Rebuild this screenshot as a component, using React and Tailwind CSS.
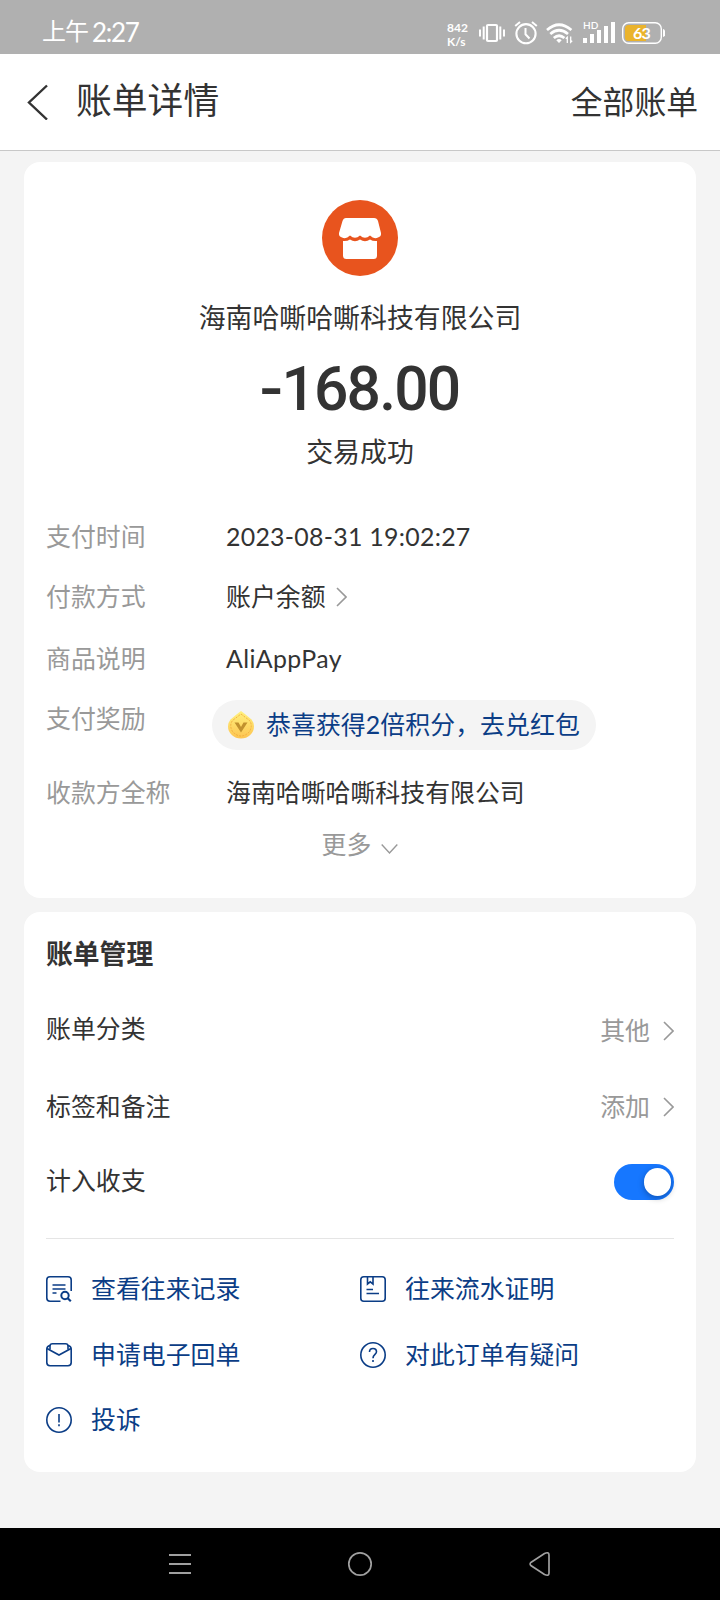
import { useState } from 'react';

const company = '海南哈嘶哈嘶科技有限公司';

const ChevronRight = ({ className }) => (
    <svg className={className} width="12" height="20" viewBox="0 0 12 20" fill="none" stroke="#999999" strokeWidth="1.6">
        <path d="M2 1 L11 10 L2 19" />
    </svg>
);

const StatusBar = () => (
    <div className="flex h-[54px] items-center bg-[#b0b0b0] pt-2 pl-[42px] text-white">
        <span className="flex w-[405px] items-center gap-[4px] text-[24px] leading-[30px] tracking-[-1px]">
            上午
            <span className="pt-px text-[26px] tracking-[-1.3px]">2:27</span>
        </span>
        <div className="w-[32px] pt-[8px] text-[12px] leading-[14px] font-bold">
            <div>842</div>
            <div>K/s</div>
        </div>
        <svg className="mt-1" width="186" height="32" viewBox="479 17 186 32" fill="none" stroke="white">
            <rect x="487" y="25" width="10" height="16" rx="1" strokeWidth="2.2" />
            <path d="M483.7 26.5V39.5M480 29.5V36.5M500.3 26.5V39.5M504 29.5V36.5" strokeWidth="2" />
            <circle cx="526" cy="33.7" r="9.6" strokeWidth="2.1" />
            <path d="M525.5 28V34.3L529.5 38.5" strokeWidth="2" />
            <path d="M515.2 26L520 22M536.8 26L532 22" strokeWidth="2" />
            <path d="M547 30Q559 19.5 571.4 30M550.3 34Q559 26.5 568 34M553.8 38Q559 33.5 564.4 38" strokeWidth="2.7" />
            <path d="M556.3 40.2Q559 38 561.7 40.2L559 43Z" fill="white" stroke="none" />
            <path d="M567.3 43V37.3L565.8 38.7M570.7 36.5V42.2L572.2 40.8" strokeWidth="1.3" />
            <g fill="white" stroke="none">
                <text x="583" y="29.2" className="text-[10px] font-semibold">HD</text>
                <rect x="583" y="38" width="4" height="5" />
                <rect x="590" y="34" width="4" height="9" />
                <rect x="597" y="30" width="4" height="13" />
                <rect x="604" y="26" width="4" height="17" />
                <rect x="611" y="22" width="4" height="21" />
            </g>
            <rect x="622.7" y="22.7" width="38.6" height="20.6" rx="6" strokeWidth="1.4" />
            <path d="M628.5 25H646V41H628.5Q625 41 625 37.5V28.5Q625 25 628.5 25Z" fill="#eab32c" stroke="none" />
            <path d="M663 29Q665.5 29.5 665.5 33T663 37Z" fill="white" stroke="none" />
            <text x="641.5" y="38.8" textAnchor="middle" className="text-[16px] font-bold tracking-[-0.7px]" fill="white" stroke="none">63</text>
        </svg>
    </div>
);

const Header = () => (
    <header className="flex h-[97px] items-center border-b border-[#c8c8c8] bg-white pr-[22px] pl-[26px]">
        <svg width="24" height="36" viewBox="0 0 24 36" fill="none" stroke="#333333" strokeWidth="2.4">
            <path d="M21 1.5 L3 18.5 L21 35.5" />
        </svg>
        <h1 className="ml-[26px] flex-1 pb-[2px] text-[35.8px] leading-[44px]">账单详情</h1>
        <span className="text-[31.8px] leading-[40px]">全部账单</span>
    </header>
);

const ShopLogo = () => (
    <svg width="76" height="76" viewBox="0 0 76 76">
        <circle cx="38" cy="38" r="38" fill="#e8541e" />
        <path d="M24 18H52Q55 18 56 21L59 33Q59.5 36.5 56 37.5Q52 39.5 48 35.5Q43 40 38 35.5Q33 40 28 35.5Q24 39.5 20 37.5Q16.5 36.5 17 33L20.5 21Q21.5 18 24 18Z" fill="white" />
        <path d="M21 41Q25 41.5 28 39.5Q33 43 38 39.5Q43 43 48 39.5Q51 41.5 55 41V55.5Q55 59 51.5 59H24.5Q21 59 21 55.5Z" fill="white" />
    </svg>
);

const Coin = () => (
    <svg width="28" height="28" viewBox="0 0 28 28">
        <defs>
            <linearGradient id="coin" x1="0" y1="0" x2="0" y2="1">
                <stop offset="0" stopColor="#fff27e" />
                <stop offset="1" stopColor="#fdc451" />
            </linearGradient>
        </defs>
        <path d="M14 0Q15 .6 18.5 3.5L24.5 8.5Q27 11.5 27 15.5A13 12 0 0 1 1 15.5Q1 11.5 3.5 8.5L9.5 3.5Q13 .6 14 0Z" fill="url(#coin)" />
        <path d="M14 3L22.5 9.5Q26 14.5 22.5 20.5Q18.5 25 14 25T5.5 20.5Q2 14.5 5.5 9.5Z" fill="none" stroke="#f0a93c" strokeWidth=".9" strokeDasharray="2 1.2" />
        <path d="M7.5 11.5H11.5L14 16L16.5 11.5H20.5L14 21.5Z" fill="#c1912e" />
    </svg>
);

const Detail = ({ label, children, className }) => (
    <div className={`flex h-9 items-center ${className}`}>
        <span className="w-[180px] text-[#999999]">{label}</span>
        {children}
    </div>
);

const icons = {
    record: (
        <>
            <path d="M25.2 15V4Q25.2 .8 22 .8H4Q.8 .8 .8 4V22Q.8 25.2 4 25.2H14.5" />
            <path d="M6.5 9H19.5M6.5 13H19.5M6.5 17H10.5" />
            <circle cx="19" cy="19.5" r="3.7" strokeWidth="2" />
            <path d="M21.7 22.2L24.8 25.2" strokeWidth="2.2" />
        </>
    ),
    flow: (
        <>
            <rect x=".8" y=".8" width="24.4" height="24.4" rx="3" />
            <path d="M7.5 1V8L10.3 5.8L13 8V1M6.5 13.5H13M6.5 17.5H19" />
        </>
    ),
    receipt: (
        <>
            <path d="M4 7.5V4Q4 1.8 6.5 1.8H19.5Q22 1.8 22 4V7.5" />
            <path d="M4 3.5Q.8 4 .8 7V20.5Q.8 23.7 4 23.7H22Q25.2 23.7 25.2 20.5V7Q25.2 4 22 3.5" />
            <path d="M1 6.5L13 13L25 6.5" />
        </>
    ),
    question: (
        <>
            <circle cx="13" cy="13" r="12.2" />
            <path d="M9.5 10Q9.5 6.5 13 6.5T16.5 9.8C16.5 12.5 13 12.5 13 16.3M13 18V20" />
        </>
    ),
    complaint: (
        <>
            <circle cx="13" cy="13" r="12.2" />
            <path d="M13 7V15.5M13 17.2V19.2" />
        </>
    ),
};

const Action = ({ icon, children }) => (
    <a className="flex h-9 items-center gap-[19px] text-[#0b3d86]">
        <svg className="shrink-0" width="26" height="26" viewBox="0 0 26 26" fill="none" stroke="currentColor" strokeWidth="1.6">
            {icons[icon]}
        </svg>
        {children}
    </a>
);

const BillInfo = () => (
    <section className="mx-6 mt-[11px] h-[736px] rounded-2xl bg-white px-[22px] pt-[38px] text-[24.9px]">
        <div className="flex flex-col items-center">
            <ShopLogo />
            <p className="mt-[22px] text-[26.9px] leading-10">{company}</p>
            <p className="mt-[22px] font-[Roboto] text-[60.5px] leading-[60px] font-medium tracking-[-1.8px]">
                <span className="mr-[2px] inline-block scale-x-115">-</span>168.00
            </p>
            <p className="mt-3 text-[26.9px] leading-10">交易成功</p>
        </div>
        <Detail label="支付时间" className="mt-[47px]">
            <span className="tracking-[0.27px]">2023-08-31 19:02:27</span>
        </Detail>
        <Detail label="付款方式" className="mt-6">
            账户余额
            <ChevronRight className="ml-[9px]" />
        </Detail>
        <Detail label="商品说明" className="mt-[26px]">
            <span className="tracking-[0.4px]">AliAppPay</span>
        </Detail>
        <div className="mt-[23px] flex h-[50px]">
            <span className="w-[166px] leading-[37px] text-[#999999]">支付奖励</span>
            <a className="flex items-center gap-[11px] rounded-full bg-[#f4f4f4] pr-4 pl-[15px] whitespace-nowrap text-[#0b3d86]">
                <Coin />
                <span className="tracking-[0.06px]">恭喜获得2倍积分，去兑红包</span>
            </a>
        </div>
        <Detail label="收款方全称" className="mt-[25px]">{company}</Detail>
        <div className="mt-4 flex h-9 items-center justify-center gap-[10px] text-[#999999]">
            更多
            <svg className="mt-2" width="17" height="12" viewBox="0 0 17 12" fill="none" stroke="currentColor" strokeWidth="1.4">
                <path d="M.7 1.5L8.5 10L16.3 1.5" />
            </svg>
        </div>
    </section>
);

const BillManage = () => {
    const [counted, setCounted] = useState(true);

    return (
        <section className="mx-6 mt-[14px] h-[560px] rounded-2xl bg-white px-[22px] pt-6 text-[24.9px]">
            <h2 className="text-[26.8px] leading-9 font-bold">账单管理</h2>
            <div className="mt-[38px] flex h-[38px] items-center justify-between">
                <span>账单分类</span>
                <span className="flex items-center gap-3 pt-[3px] text-[#999999]">
                    其他
                    <ChevronRight />
                </span>
            </div>
            <div className="mt-10 flex h-[38px] items-center justify-between">
                <span>标签和备注</span>
                <span className="flex items-center gap-3 text-[#999999]">
                    添加
                    <ChevronRight />
                </span>
            </div>
            <div className="mt-[38px] flex h-9 items-center justify-between">
                <span className="pb-[2px]">计入收支</span>
                <button
                    onClick={() => setCounted(!counted)}
                    className={`flex h-9 w-[60px] items-center rounded-full px-[3px] ${counted ? 'justify-end bg-[#1677ff]' : 'justify-start bg-[#cccccc]'}`}
                >
                    <span className="h-7 w-[27px] rounded-full bg-white shadow-[0_2px_6px_rgba(0,0,0,0.3)]" />
                </button>
            </div>
            <div className="mt-[38px] border-t border-[#e5e5e5]" />
            <div className="mt-8 grid grid-cols-2 gap-y-[29.5px]">
                <Action icon="record">查看往来记录</Action>
                <Action icon="flow">往来流水证明</Action>
                <Action icon="receipt">申请电子回单</Action>
                <Action icon="question">对此订单有疑问</Action>
                <Action icon="complaint">投诉</Action>
            </div>
        </section>
    );
};

const NavBar = () => (
    <nav className="mt-auto flex h-[72px] items-center justify-center gap-[154px] bg-black">
        <svg width="26" height="26" viewBox="0 0 26 26" stroke="#a0a0a0" strokeWidth="2">
            <path d="M2 4H24M2 13H24M2 22H24" />
        </svg>
        <svg width="26" height="26" viewBox="0 0 26 26" fill="none" stroke="#a0a0a0" strokeWidth="1.7">
            <circle cx="13" cy="13" r="11.2" />
        </svg>
        <svg width="26" height="26" viewBox="0 0 26 26" fill="none" stroke="#a0a0a0" strokeWidth="1.7">
            <path d="M4.2 11.2L17.5 2.5Q22 .5 22 4V22Q22 25.5 17.5 23.5L4.2 14.8Q2 13 4.2 11.2Z" />
        </svg>
    </nav>
);

export default function App() {
    return (
        <div className="flex h-[1600px] w-[720px] flex-col overflow-hidden bg-[#f4f4f4] font-[Lato,'Noto_Sans_CJK_SC',sans-serif] text-[#333333]">
            <StatusBar />
            <Header />
            <BillInfo />
            <BillManage />
            <NavBar />
        </div>
    );
}
